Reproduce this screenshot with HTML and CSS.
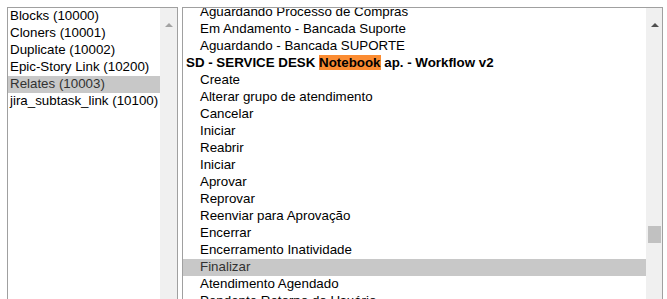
FILE: index.html
```html
<!DOCTYPE html>
<html>
<head>
<meta charset="utf-8">
<link rel="stylesheet" href="styles.css">
</head>
<body>
<div class="wrap">
  <div class="box box-left">
    <div class="list">
      <div class="opt">Blocks (10000)</div>
      <div class="opt">Cloners (10001)</div>
      <div class="opt">Duplicate (10002)</div>
      <div class="opt">Epic-Story Link (10200)</div>
      <div class="opt sel">Relates (10003)</div>
      <div class="opt">jira_subtask_link (10100)</div>
    </div>
    <div class="sbar">
      <div class="arrow arrow-off"></div>
    </div>
  </div>
  <div class="box box-right">
    <div class="list">
      <div class="scroller">
        <div class="opt ind">Aguardando Processo de Compras</div>
        <div class="opt ind">Em Andamento - Bancada Suporte</div>
        <div class="opt ind">Aguardando - Bancada SUPORTE</div>
        <div class="opt grp">SD - SERVICE DESK <span class="hl">Notebook</span> ap. - Workflow v2</div>
        <div class="opt ind">Create</div>
        <div class="opt ind">Alterar grupo de atendimento</div>
        <div class="opt ind">Cancelar</div>
        <div class="opt ind">Iniciar</div>
        <div class="opt ind">Reabrir</div>
        <div class="opt ind">Iniciar</div>
        <div class="opt ind">Aprovar</div>
        <div class="opt ind">Reprovar</div>
        <div class="opt ind">Reenviar para Aprovação</div>
        <div class="opt ind">Encerrar</div>
        <div class="opt ind">Encerramento Inatividade</div>
        <div class="opt ind sel">Finalizar</div>
        <div class="opt ind">Atendimento Agendado</div>
        <div class="opt ind">Pendente Retorno do Usuário</div>
      </div>
    </div>
    <div class="sbar sbar-right">
      <div class="arrow"></div>
      <div class="thumb"></div>
    </div>
  </div>
</div>
</body>
</html>
```

FILE: styles.css
```css
html, body {
  margin: 0;
  padding: 0;
  background: #ffffff;
}
body {
  font-family: "Liberation Sans", Arial, sans-serif;
  font-size: 13.33px;
  color: #000;
  overflow: hidden;
  height: 299px;
}
.wrap {
  display: flex;
  gap: 4px;
  padding: 7px 0 0 7px;
}
.box {
  display: flex;
  border: 1px solid #a0a0a0;
  border-bottom: none;
  height: 300px;
  box-sizing: border-box;
  background: #fff;
}
.box-left {
  width: 171px;
}
.box-right {
  width: 481px;
}
.list {
  flex: 1;
  overflow: hidden;
  min-width: 0;
}
.scroller {
  margin-top: -4px;
}
.opt {
  height: 17px;
  line-height: 15px;
  white-space: nowrap;
  padding-left: 2px;
}
.opt.ind {
  padding-left: 17px;
}
.opt.grp {
  font-weight: bold;
  padding-left: 3px;
}
.opt.sel {
  background: #c8c8c8;
  color: #323232;
}
.hl {
  background: #fb8c32;
}
.sbar {
  width: 17px;
  background: #f0f0f0;
  position: relative;
}
.sbar-right {
  width: 16px;
}
.arrow {
  position: absolute;
  top: 15px;
  left: 5px;
  width: 0;
  height: 0;
  border-left: 4px solid transparent;
  border-right: 4px solid transparent;
  border-bottom: 4px solid #505050;
}
.arrow-off {
  border-bottom-color: #a3a3a3;
}
.thumb {
  position: absolute;
  left: 2px;
  right: 1px;
  top: 218px;
  height: 17px;
  background: #c1c1c1;
}
```
